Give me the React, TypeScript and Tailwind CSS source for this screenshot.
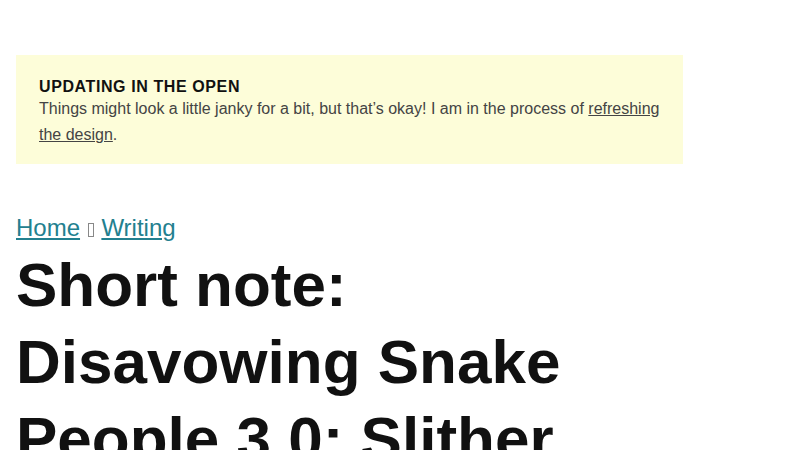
export default function App() {
  return (
    <div className="min-h-[450px] bg-white px-4 pt-[55px]" style={{ fontFamily: '"Liberation Sans", Arial, sans-serif' }}>
      <div className="w-[667px] bg-[#fdfdd9] px-[23px] pt-[22px] pb-[16px]">
        <div className="text-[16px] font-bold leading-[19px] tracking-[0.6px] text-[#111]">UPDATING IN THE OPEN</div>
        <p className="text-[16px] leading-[26px] text-[#444]">
          Things might look a little janky for a bit, but that’s okay! I am in the process of{" "}
          <a href="#" className="underline">refreshing the design</a>.
        </p>
      </div>
      <nav className="mt-[49px] text-[24px] leading-[30px] text-[#555]">
        <a href="#" className="text-[#23808f] underline">Home</a>{" "}
        <span className="mx-[1px] inline-block h-[14px] w-[6px] border border-[#888] align-[-1px]"></span>{" "}
        <a href="#" className="text-[#23808f] underline">Writing</a>
      </nav>
      <h1 className="mt-[3px] w-[600px] text-[62px] font-bold leading-[77px] text-[#111]">
        Short note: Disavowing Snake People 3.0: Slither
      </h1>
    </div>
  );
}
